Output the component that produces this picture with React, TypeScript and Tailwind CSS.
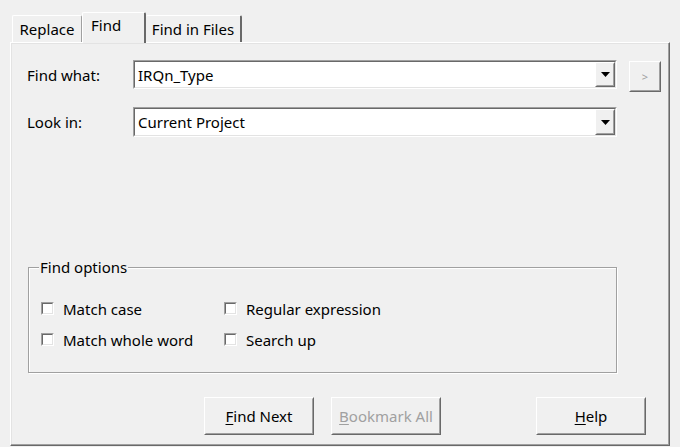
import React from "react";

const Sunken = ({ className = "", children }: { className?: string; children?: React.ReactNode }) => (
  <div className={`border border-t-[#a0a0a0] border-l-[#a0a0a0] border-b-white border-r-white ${className}`}>
    <div className="w-full h-full border border-t-[#696969] border-l-[#696969] border-b-[#e3e3e3] border-r-[#e3e3e3] bg-white flex items-stretch">
      {children}
    </div>
  </div>
);

const Raised = ({ className = "", children }: { className?: string; children?: React.ReactNode }) => (
  <div className={`border border-t-white border-l-white border-b-[#696969] border-r-[#696969] ${className}`}>
    <div className="w-full h-full border border-t-[#f0f0f0] border-l-[#f0f0f0] border-b-[#a0a0a0] border-r-[#a0a0a0] bg-[#f0f0f0] flex items-center justify-center">
      {children}
    </div>
  </div>
);

const Combo = ({ value, className = "" }: { value: string; className?: string }) => (
  <Sunken className={`w-[484px] ${className}`}>
    <div className="flex-1 flex items-center pl-[3px] leading-[20px]">{value}</div>
    <Raised className="w-[20px] h-full">
      <svg width="9" height="5" viewBox="0 0 9 5">
        <path d="M0 0H9L4.5 5Z" fill="#000" />
      </svg>
    </Raised>
  </Sunken>
);

const Check = ({ label }: { label: string }) => (
  <div className="flex items-center h-[31px]">
    <div className="w-[13px] h-[13px] border border-t-[#a0a0a0] border-l-[#a0a0a0] border-b-white border-r-white">
      <div className="w-full h-full border border-t-[#696969] border-l-[#696969] border-b-[#e3e3e3] border-r-[#e3e3e3] bg-white" />
    </div>
    <span className="ml-[9px] leading-[20px]">{label}</span>
  </div>
);

export default function App() {
  return (
    <div className="w-[680px] h-[447px] bg-[#f0f0f0] font-['Noto_Sans',sans-serif] text-[15px] text-black overflow-hidden pt-[12px] pl-[10px]">
      {/* Tabs */}
      <div className="flex items-end h-[30px] pl-[2px]">
        <div className="w-[70px] h-[27px] border-t border-l border-white border-r border-r-[#a0a0a0] rounded-t-[2px] flex items-center justify-center leading-[20px]">
          Replace
        </div>
        <div className="relative z-10 w-[64px] h-[31px] -mb-px bg-[#f0f0f0] border-t border-l border-white border-r-2 border-r-[#696969] rounded-t-[2px] flex items-start pt-[2px] pl-[8px] leading-[20px]">
          Find
        </div>
        <div className="w-[96px] h-[27px] border-t border-white border-r-2 border-r-[#696969] rounded-t-[2px] flex items-center justify-center leading-[20px]">
          Find in Files
        </div>
      </div>

      {/* Panel */}
      <div className="w-[660px] h-[404px] border-t border-l border-t-white border-l-white border-b border-r border-b-[#696969] border-r-[#696969] shadow-[inset_-1px_-1px_0_#a0a0a0,inset_1px_1px_0_#e3e3e3] pl-[16px] pt-[17px]">
        <div className="flex items-start">
          <div className="w-[106px] h-[29px] flex items-center leading-[20px]">Find what:</div>
          <Combo value="IRQn_Type" className="h-[29px]" />
          <Raised className="ml-[12px] mt-px w-[32px] h-[31px]">
            <span className="text-[11px] text-[#a0a0a0] leading-none">&gt;</span>
          </Raised>
        </div>
        <div className="flex items-start mt-[15px]">
          <div className="w-[106px] h-[30px] flex items-center leading-[20px]">Look in:</div>
          <Combo value="Current Project" className="h-[30px]" />
        </div>

        {/* Group box */}
        <div className="relative mt-[130px] ml-px w-[589px] h-[106px] border border-[#a0a0a0] shadow-[inset_1px_1px_0_#ffffff,1px_1px_0_#ffffff] pt-[25px] pl-[12px]">
          <div className="absolute left-[10px] top-[-11px] px-px bg-[#f0f0f0] leading-[20px]">Find options</div>
          <div className="grid grid-cols-[183px_auto]">
            <Check label="Match case" />
            <Check label="Regular expression" />
            <Check label="Match whole word" />
            <Check label="Search up" />
          </div>
        </div>

        {/* Buttons */}
        <div className="flex mt-[24px] ml-[177px]">
          <Raised className="w-[110px] h-[38px]">
            <span className="leading-[20px]"><span className="underline underline-offset-2">F</span>ind Next</span>
          </Raised>
          <Raised className="ml-[17px] w-[110px] h-[38px]">
            <span className="leading-[20px] text-[#a0a0a0]"><span className="underline underline-offset-2">B</span>ookmark All</span>
          </Raised>
          <Raised className="ml-[95px] w-[110px] h-[38px]">
            <span className="leading-[20px]"><span className="underline underline-offset-2">H</span>elp</span>
          </Raised>
        </div>
      </div>
    </div>
  );
}
